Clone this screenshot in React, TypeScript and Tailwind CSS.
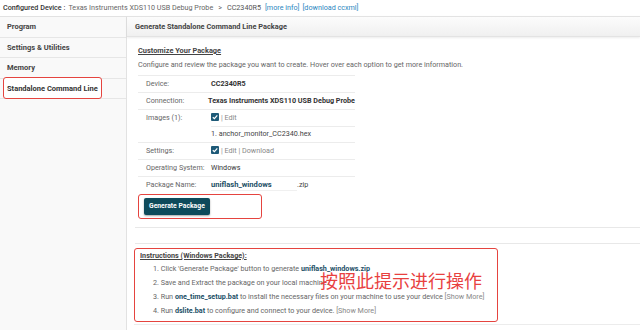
import React from 'react';

const font = { fontFamily: 'Roboto, "Noto Sans CJK SC", sans-serif' };

const Check: React.FC = () => (
  <svg width="8" height="8" viewBox="0 0 8 8" className="inline-block align-[-1px] mr-[2px]">
    <rect x="0" y="0" width="8" height="8" rx="1" fill="#1e5a78" />
    <path d="M1.8 4.2 L3.4 5.7 L6.3 2.3" stroke="#fff" strokeWidth="1.2" fill="none" />
  </svg>
);

const Row: React.FC<{ label: string; children: React.ReactNode }> = ({ label, children }) => (
  <div className="flex items-center h-[17px] border-t border-[#ececec] whitespace-nowrap">
    <div className="w-[73px] pl-[8px] text-[#666]">{label}</div>
    <div className="flex-1 text-[#333]">{children}</div>
  </div>
);

const sideItems = ['Program', 'Settings & Utilities', 'Memory', 'Standalone Command Line'];

const App: React.FC = () => {
  return (
    <div className="w-[640px] h-[330px] bg-white overflow-hidden relative text-[7.2px] text-[#444]" style={font}>
      {/* top bar */}
      <div className="h-[16px] flex items-center px-[3px] gap-[3px] whitespace-nowrap">
        <span className="text-[#333] font-medium">Configured Device :</span>
        <span className="text-[#666]">Texas Instruments XDS110 USB Debug Probe</span>
        <span className="text-[#666] mx-[2px]">&gt;</span>
        <span className="text-[#555]">CC2340R5</span>
        <span className="text-[#2a86c0] ml-[1px]">[more info]</span>
        <span className="text-[#2a86c0]">[download ccxml]</span>
      </div>

      <div className="flex h-[314px]">
        {/* sidebar */}
        <div className="w-[127px] shrink-0 bg-[#f9f9f9] border-r border-[#e2e2e2] border-t">
          {sideItems.map((s) => (
            <div key={s} className="h-[20.5px] flex items-center px-[3px] border-b border-[#e6e6e6] whitespace-nowrap">
              {s === 'Standalone Command Line' ? (
                <span className="border-[1.5px] border-[#e5443f] rounded-[3px] px-[3px] h-[22px] w-[99px] flex items-center font-bold text-[#333] text-[7.5px] bg-white">{s}</span>
              ) : (
                <span className="px-[4px] font-bold text-[#444] text-[7.5px]">{s}</span>
              )}
            </div>
          ))}
        </div>

        {/* main */}
        <div className="flex-1 flex flex-col">
          <div className="h-[21px] shrink-0 flex items-center px-[8px] bg-gradient-to-b from-[#fcfcfc] to-[#f0f0f0] border-y border-[#e3e3e3] shadow-[0_1px_2px_rgba(0,0,0,0.08)] font-bold text-[#444] text-[7.4px]">
            Generate Standalone Command Line Package
          </div>

          <div className="pl-[11px] pt-[8px]">
            <div className="font-bold underline text-[#444] text-[7.4px] h-[12px] leading-[12px]">Customize Your Package</div>
            <div className="text-[#666] h-[14px] leading-[14px] mt-[1px] whitespace-nowrap">Configure and review the package you want to create. Hover over each option to get more information.</div>

            <div className="w-[217px] mt-[3px]">
              <Row label="Device:"><span className="font-bold">CC2340R5</span></Row>
              <Row label="Connection:"><span className="font-bold">Texas Instruments XDS110 USB Debug Probe</span></Row>
              <Row label="Images (1):"><Check /><span className="text-[#888]">| Edit</span></Row>
              <div className="flex items-center h-[16px]">
                <div className="w-[73px]" />
                <div className="flex-1 h-full flex items-center border-t border-[#ececec] text-[#444]">1. anchor_monitor_CC2340.hex</div>
              </div>
              <Row label="Settings:"><Check /><span className="text-[#888]">| Edit | Download</span></Row>
              <Row label="Operating System:"><span>Windows</span></Row>
              <Row label="Package Name:">
                <span className="inline-flex items-center">
                  <span className="w-[86px] font-bold text-[#1c4f66] text-[7.6px] border-b border-[#f0f0f0]">uniflash_windows</span>
                  <span className="text-[#444]">.zip</span>
                </span>
              </Row>
            </div>

            <div className="mt-[1px] w-[124px] h-[25px] border-[1.5px] border-[#e5443f] rounded-[3px] flex items-center pl-[5px]">
              <button className="h-[17px] px-[5px] bg-[#0e4a5a] text-white font-bold rounded-[2px] shadow-[0_1px_2px_rgba(0,0,0,0.35)] text-[6.8px]">
                Generate Package
              </button>
            </div>
          </div>

          <div className="ml-[8px] mt-[8px] border-t border-[#e8e8e8]" />
          <div className="ml-[8px] mt-[15px] border-t border-[#e8e8e8]" />

          <div className="ml-[7px] mt-[4px] w-[364px] h-[74px] border-[1.5px] border-[#e5443f] rounded-[3px] pl-[5px] pt-[1px] text-[#666] whitespace-nowrap">
            <div className="font-bold underline text-[#444] h-[12px] leading-[12px]">Instructions (Windows Package):</div>
            <div className="pl-[13px]">
              <div className="h-[14px] leading-[14px]">1. Click 'Generate Package' button to generate <span className="font-bold text-[#1c4f66]">uniflash_windows.zip</span></div>
              <div className="h-[14px] leading-[14px]">2. Save and Extract the package on your local machine.</div>
              <div className="h-[14px] leading-[14px]">3. Run <span className="font-bold text-[#1c4f66]">one_time_setup.bat</span> to install the necessary files on your machine to use your device <span className="text-[#888]">[Show More]</span></div>
              <div className="h-[14px] leading-[14px]">4. Run <span className="font-bold text-[#1c4f66]">dslite.bat</span> to configure and connect to your device. <span className="text-[#888]">[Show More]</span></div>
            </div>
          </div>
          <div className="ml-[7px] mt-[2px] border-t border-[#ececec]" />
        </div>
      </div>

      <div className="absolute left-[320px] top-[271px] text-[#e8413f] text-[18px] leading-[18px] whitespace-nowrap" style={{ fontFamily: '"Noto Sans CJK SC", sans-serif' }}>
        按照此提示进行操作
      </div>
    </div>
  );
};

export default App;
